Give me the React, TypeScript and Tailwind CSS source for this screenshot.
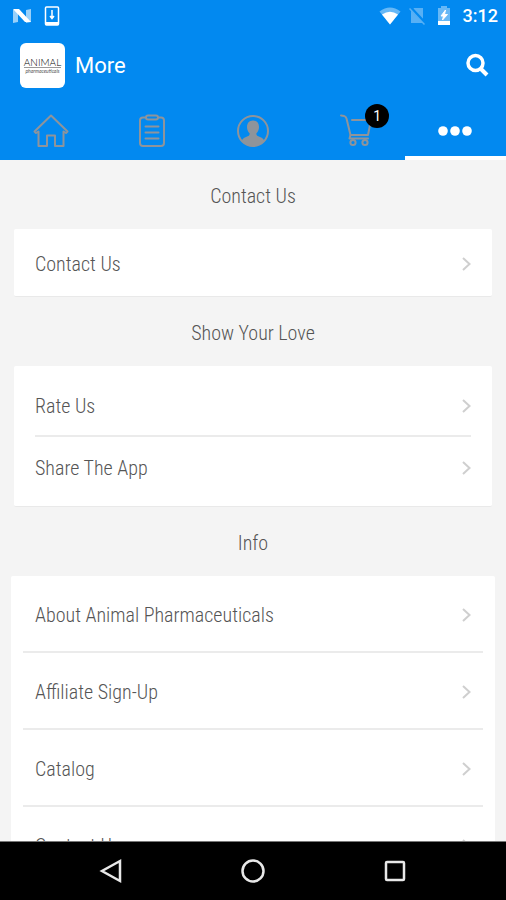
import { ReactNode, useState } from 'react';

interface Section {
  title: string;
  items: string[];
  variant: 'single' | 'compact' | 'wide';
}

const sections: Section[] = [
  { title: 'Contact Us', items: ['Contact Us'], variant: 'single' },
  { title: 'Show Your Love', items: ['Rate Us', 'Share The App'], variant: 'compact' },
  {
    title: 'Info',
    items: ['About Animal Pharmaceuticals', 'Affiliate Sign-Up', 'Catalog', 'Contact Us'],
    variant: 'wide',
  },
];

const cardStyles = {
  single: 'mx-[14px] px-[21px]',
  compact: 'mx-[14px] px-[21px] py-[9px]',
  wide: 'mx-[11px] px-3',
};

const rowStyles = {
  single: 'h-[67px]',
  compact: 'h-[60px]',
  wide: 'h-[75px] px-3',
};

function HomeIcon() {
  return (
    <svg width="36" height="34" viewBox="0 0 36 34" fill="none" stroke="currentColor" strokeWidth="2" strokeLinejoin="round">
      <path d="M18 1.5 L1.5 17.5 L3 19 L5.5 17.5 V32 H14 V21.5 H22 V32 H30.5 V17.5 L33 19 L34.5 17.5 Z" />
    </svg>
  );
}

function ClipboardIcon() {
  return (
    <svg width="26" height="34" viewBox="0 0 26 34" fill="none" stroke="currentColor" strokeWidth="2" strokeLinecap="round">
      <path d="M7 3.5 H4 Q1 3.5 1 6.5 V29 Q1 32 4 32 H22 Q25 32 25 29 V6.5 Q25 3.5 22 3.5 H19" />
      <path d="M9 1.5 H17 Q19 1.5 19 3.5 Q19 5.5 17 5.5 H9 Q7 5.5 7 3.5 Q7 1.500 9 1.500 Z" />
      <path d="M6.5 12.5 H19.5 M6.5 18.5 H19.5 M6.5 24.500 H19.5" />
    </svg>
  );
}

function ProfileIcon() {
  return (
    <svg width="34" height="34" viewBox="0 0 34 34">
      <circle cx="17" cy="17" r="15" fill="none" stroke="currentColor" strokeWidth="2" />
      <path
        d="M17 6.5 C20.8 6.5 23 9.3 23 13 C23 16 21.8 18 20.3 19.5 C20.3 21.5 21.5 22 24 23 C26.5 24 28 25 28.5 27.5 C25.5 30.5 21.5 32 17 32 C12.5 32 8.5 30.5 5.5 27.5 C6 25 7.5 24 10 23 C12.5 22 13.7 21.5 13.7 19.5 C12.2 18 11 16 11 13 C11 9.3 13.2 6.5 17 6.5 Z"
        fill="currentColor"
      />
    </svg>
  );
}

function CartIcon() {
  return (
    <svg width="34" height="34" viewBox="0 0 34 34" fill="none" stroke="currentColor" strokeWidth="2" strokeLinecap="round" strokeLinejoin="round">
      <path d="M4 1.5 L7 2 Q9 2.5 9.500 4.500 L13.500 21 H31 L34 6 H15" />
      <path d="M13.5 21 L12.500 24.500 H31" />
      <circle cx="16" cy="28.5" r="2.6" />
      <circle cx="28" cy="28.5" r="2.6" />
    </svg>
  );
}

function DotsIcon() {
  return (
    <svg width="34" height="34" viewBox="0 0 34 34" fill="currentColor">
      <circle cx="5" cy="17" r="4.8" />
      <circle cx="17" cy="17" r="4.8" />
      <circle cx="29" cy="17" r="4.8" />
    </svg>
  );
}

function Chevron() {
  return (
    <svg className="shrink-0" width="10" height="16" viewBox="0 0 10 16" fill="none" stroke="#cfcfcf" strokeWidth="2">
      <path d="M2 2 L8.5 8 L2 14" />
    </svg>
  );
}

const tabs: { name: string; icon: ReactNode; badge?: number }[] = [
  { name: 'Home', icon: <HomeIcon /> },
  { name: 'Orders', icon: <ClipboardIcon /> },
  { name: 'Account', icon: <ProfileIcon /> },
  { name: 'Cart', icon: <CartIcon />, badge: 1 },
  { name: 'More', icon: <DotsIcon /> },
];

function StatusBar() {
  return (
    <div className="flex h-8 items-center justify-between pr-2 pl-3 text-white">
      <div className="flex items-center gap-3">
        <svg width="20" height="16" viewBox="0 0 20 16">
          <path d="M1 2 L6 1 V14 L1 15 Z M14 2 L19 1 V14 L14 15 Z" fill="#fff" opacity="0.6" />
          <path d="M1 1 H7 L19 14 H13 Z" fill="#fff" />
        </svg>
        <svg width="16" height="20" viewBox="0 0 16 20">
          <rect x="1.5" y="1" width="13" height="18" rx="1" fill="none" stroke="#fff" strokeWidth="1.500" />
          <path d="M1 16 H15 V19 H1 Z" fill="#fff" />
          <path d="M8 4 V12 M6 10 L8 12.500 L10 10" fill="none" stroke="#fff" strokeWidth="1.500" />
        </svg>
      </div>
      <div className="flex items-center gap-2">
        <svg width="22" height="18" viewBox="0 0 22 18">
          <path d="M0.5 4.5 Q11 -3.5 21.5 4.5 L11 17.5 Z" fill="#fff" opacity="0.4" />
          <path d="M3 7.5 Q11 2 19 7.5 L11 17.5 Z" fill="#fff" />
        </svg>
        <svg width="16" height="18" viewBox="0 0 16 18">
          <path d="M5 1 H14 V16 H2 V4 Z" fill="#57b0f5" />
          <path d="M1 0 L16 16" stroke="#0289f0" strokeWidth="3" />
          <path d="M0.5 1.5 L15.5 17.5" stroke="#57b0f5" strokeWidth="1.5" />
        </svg>
        <svg className="mx-1" width="14" height="20" viewBox="0 0 14 20">
          <path d="M4 0 H10 V2 H13 V15 H1 V2 H4 Z" fill="#fff" opacity="0.4" />
          <path d="M1 15 H13 V19 H1 Z" fill="#fff" />
          <path d="M8.5 4 L4 10 H6.5 L5.5 14 L10.5 8.5 H7.5 Z" fill="#fff" stroke="#fff" />
        </svg>
        <span className="text-lg font-medium">3:12</span>
      </div>
    </div>
  );
}

function MenuCard({ section }: { section: Section }) {
  const { title, items, variant } = section;

  return (
    <section>
      <h2 className="flex h-[69px] items-center justify-center pt-0.5">{title}</h2>
      <ul className={`rounded-xs border-b border-[#e9e9e9] bg-white ${cardStyles[variant]}`}>
        {items.map((item, i) => (
          <li key={item} className={i > 0 ? 'border-t-2 border-[#ebebeb]' : ''}>
            <a href="#" className={`flex items-center justify-between pt-0.5 ${rowStyles[variant]}`}>
              {item}
              <Chevron />
            </a>
          </li>
        ))}
      </ul>
    </section>
  );
}

export default function App() {
  const [activeTab, setActiveTab] = useState('More');

  return (
    <div className="flex h-screen flex-col bg-[#f4f4f4] font-['Roboto_Condensed',Roboto,sans-serif] text-xl font-light text-[#555]">
      <header className="bg-[#0289f0] font-[Roboto,sans-serif] font-normal">
        <StatusBar />
        <div className="flex h-[66px] items-center justify-between pr-[17px] pl-5 text-white">
          <div className="flex items-center gap-[10px]">
            <div className="flex size-[45px] flex-col items-center justify-center rounded-md bg-white text-[#555]">
              <span className="border-b border-[#999] font-[Lato,sans-serif] text-[10px] leading-[10px] font-light text-black">
                ANIMAL
              </span>
              <span className="font-[Lato,sans-serif] text-[5px] leading-[6px] italic">pharmaceuticals</span>
            </div>
            <h1 className="pt-0.5 text-[22px]">More</h1>
          </div>
          <button aria-label="Search">
            <svg width="24" height="24" viewBox="0 0 24 24" fill="none" stroke="currentColor" strokeWidth="3.5">
              <circle cx="10.5" cy="10" r="7.5" />
              <path d="M15.5 15.5 L22 22" strokeWidth="4" />
            </svg>
          </button>
        </div>

        {/* Tab bar */}
        <nav className="grid h-[62px] grid-cols-5">
          {tabs.map((tab) => (
            <button
              key={tab.name}
              aria-label={tab.name}
              onClick={() => setActiveTab(tab.name)}
              className={`flex items-center justify-center border-b-4 pt-2 ${
                activeTab === tab.name ? 'border-white text-white' : 'border-transparent text-[#8e949b]'
              }`}
            >
              <span className="relative">
                {tab.icon}
                {tab.badge && (
                  <span className="absolute -top-2.5 -right-4.5 flex size-6 items-center justify-center rounded-full bg-black text-sm text-white">
                    {tab.badge}
                  </span>
                )}
              </span>
            </button>
          ))}
        </nav>
      </header>

      <main className="min-h-0 flex-1 overflow-hidden">
        {sections.map((section) => (
          <MenuCard key={section.title} section={section} />
        ))}
      </main>

      {/* System navigation */}
      <footer className="flex h-[59px] items-center justify-center gap-[118px] border-t border-[#777] bg-black text-[#e8e8e8]">
        <button aria-label="Back">
          <svg width="24" height="26" viewBox="0 0 24 26" fill="none" stroke="currentColor" strokeWidth="2.5">
            <path d="M21 3 V23 L3 13 Z" />
          </svg>
        </button>
        <button aria-label="Home">
          <svg width="24" height="24" viewBox="0 0 24 24" fill="none" stroke="currentColor" strokeWidth="2.5">
            <circle cx="12" cy="12" r="10.5" />
          </svg>
        </button>
        <button aria-label="Recent apps">
          <svg width="24" height="24" viewBox="0 0 24 24" fill="none" stroke="currentColor" strokeWidth="2.5">
            <rect x="3" y="3" width="18" height="18" rx="1" />
          </svg>
        </button>
      </footer>
    </div>
  );
}
